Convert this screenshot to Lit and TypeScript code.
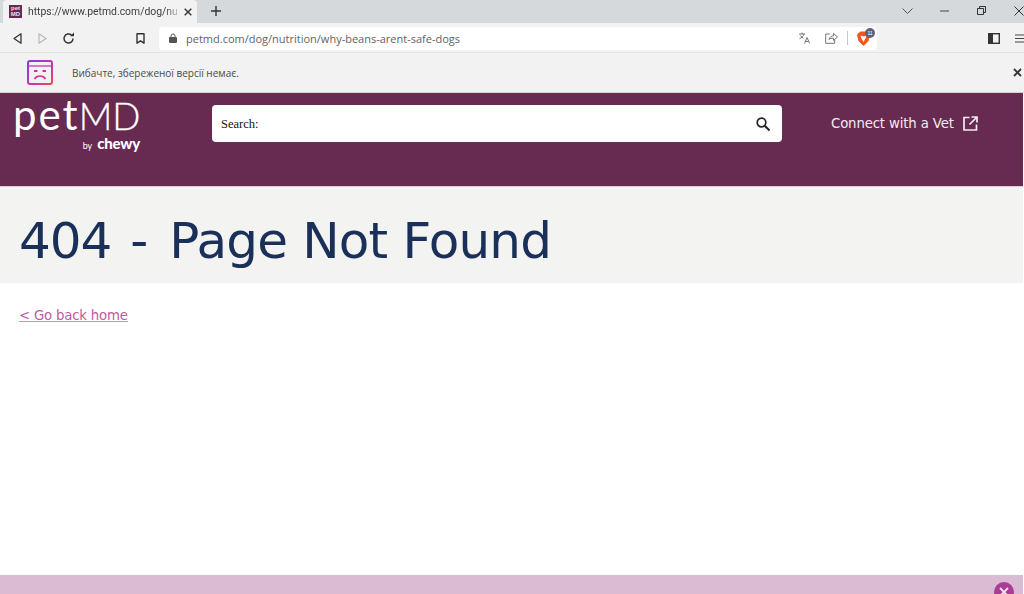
import { LitElement, html, css } from "lit";
import { customElement } from "lit/decorators.js";

@customElement("app-root")
export class AppRoot extends LitElement {
  static styles = css`
    :host { display: flex; flex-direction: column; width: 1024px; height: 594px; overflow: hidden; background: #fff; font-family: "Open Sans", "Noto Sans", sans-serif; color: #333; }
    svg { display: block; flex: none; }
    .tabstrip { height: 23px; background: #d5d9dc; display: flex; align-items: flex-end; flex: none; }
    .tab { margin-left: 3px; width: 194px; height: 23px; background: #f2f2f2; border-radius: 4px 4px 0 0; display: flex; align-items: center; box-sizing: border-box; padding-left: 6px; }
    .fav { width: 13px; height: 13px; background: #66294f; color: #f0e0e8; font: 700 6px/6px "Liberation Sans", sans-serif; text-align: center; flex: none; overflow: hidden; }
    .tabtitle { margin-left: 6px; width: 149px; white-space: nowrap; font: 10.4px Roboto, sans-serif; color: #3c4043; flex: none; -webkit-mask-image: linear-gradient(90deg, #000 92%, rgba(0,0,0,.3)); mask-image: linear-gradient(90deg, #000 92%, rgba(0,0,0,.3)); }
    .tabx { margin-left: 7px; }
    .newtab { margin-left: 14px; margin-bottom: 7px; }
    .spring { flex: 1; }
    .winctl { display: flex; align-items: center; height: 21px; margin-bottom: 2px; gap: 28px; }
    .toolbar { height: 30px; background: #f2f2f2; border-bottom: 1px solid #e4e4e4; box-sizing: border-box; display: flex; align-items: center; flex: none; padding-top: 1px; }
    .back { margin-left: 13px; }
    .fwd { margin-left: 16px; }
    .reload { margin-left: 15px; }
    .bookmark { margin-left: 61px; }
    .omni { margin-left: 14px; width: 718px; height: 23px; background: #fff; border-radius: 4px; display: flex; align-items: center; box-sizing: border-box; padding: 0 7px 0 10px; }
    .url { margin-left: 9px; font: 11px "Open Sans", sans-serif; color: #5f6368; white-space: nowrap; }
    .sep { width: 1px; height: 14px; background: #c8c8c8; margin: 0 9px; }
    .brave { position: relative; }
    .count { position: absolute; left: 8px; top: -3px; width: 10px; height: 10px; border-radius: 50%; background: #5f6375; color: #fff; font: 5px/10px "Liberation Sans", sans-serif; text-align: center; }
    .infobar { height: 40px; background: #f2f2f2; border-bottom: 1px solid #d4d4d4; box-sizing: border-box; display: flex; align-items: center; flex: none; padding-left: 27px; }
    .infotext { margin-left: 19px; font: 10px "Open Sans", sans-serif; color: #4a4a4a; }
    .infox { margin-left: auto; margin-right: 2px; }
    .pagewrap { flex: 1; display: flex; flex-direction: column; width: 1023px; }
    .page { flex: 1; display: flex; flex-direction: column; }
    .header { height: 94px; background: #672a51; border-bottom: 1px solid #d9d0d6; box-sizing: border-box; display: flex; align-items: flex-start; flex: none; }
    .logo { width: 199px; margin-left: 13px; color: #fff; flex: none; display: flex; flex-direction: column; }
    .logomain { width: 127px; white-space: nowrap; display: flex; align-items: baseline; height: 42px; font: 400 42px/42px Lato, sans-serif; letter-spacing: 2px; }
    .logomain .md { font: 300 37px/42px Lato, sans-serif; margin-left: -1px; letter-spacing: 0; -webkit-text-stroke: 0.3px #fff; }
    .logosub { width: 127px; margin-top: 1px; display: flex; justify-content: flex-end; align-items: baseline; gap: 5px; font: 9px/15px Lato, sans-serif; }
    .logosub b { font: 900 15px/15px Lato, sans-serif; letter-spacing: -0.2px; }
    .search { margin-top: 12px; width: 570px; height: 37px; background: #fff; border-radius: 4px; display: flex; align-items: center; justify-content: space-between; box-sizing: border-box; padding: 1px 12px 0 9px; flex: none; font: 12.5px "Liberation Serif", serif; color: #111; }
    .connect { margin-left: 49px; margin-top: 12px; height: 37px; display: flex; align-items: center; gap: 9px; font: 13.3px "DejaVu Sans", Verdana, sans-serif; letter-spacing: -0.15px; color: #f4eaf0; white-space: nowrap; }
    .band { height: 96px; background: #f3f3f2; flex: none; padding-left: 19px; box-sizing: border-box; }
    h1 { margin: 0; font: 400 50px/108px "DejaVu Sans", Verdana, sans-serif; color: #1b3059; white-space: nowrap; }
    .code { letter-spacing: -1px; margin-right: 3px; }
    .rest { letter-spacing: -0.8px; margin-left: 5px; }
    .body { flex: 1; padding: 20px 19px 0; }
    a { font: 13.3px/18px "DejaVu Sans", Verdana, sans-serif; letter-spacing: -0.2px; color: #bc5aa3; text-decoration: underline; text-decoration-color: #dd85c8; }
    .bottom { height: 19px; background: #d9bbd4; flex: none; position: relative; }
    .close { position: absolute; left: 994px; top: 7px; width: 20px; height: 20px; border-radius: 50%; background: #ab3c95; display: flex; align-items: center; justify-content: center; }
  `;

  render() {
    return html`
      <div class="tabstrip">
        <div class="tab">
          <div class="fav">pet<br />MD</div>
          <div class="tabtitle">https://www.petmd.com/dog/nut</div>
          <svg class="tabx" width="8" height="8" viewBox="0 0 8 8"><path d="M.7.7l6.600 6.600M7.300.7l-6.600 6.600" stroke="#333" stroke-width="1.400"/></svg>
        </div>
        <svg class="newtab" width="10" height="10" viewBox="0 0 10 10"><path d="M5 0v10M0 5h10" stroke="#333" stroke-width="1.400"/></svg>
        <div class="spring"></div>
        <div class="winctl">
          <svg style="margin-right:-1px" width="11" height="6" viewBox="0 0 11 6"><path d="M.5.5l5 5 5-5" fill="none" stroke="#555" stroke-width="1"/></svg>
          <svg width="9" height="2" viewBox="0 0 9 2"><path d="M0 1h9" stroke="#444" stroke-width="1"/></svg>
          <svg width="9" height="9" viewBox="0 0 9 9"><path d="M.5 2.500h6v6h-6zM2.500 2.500v-2h6v6h-2" fill="none" stroke="#333" stroke-width="1"/></svg>
          <svg width="10" height="10" viewBox="0 0 10 10"><path d="M.5.5l9 9M9.500.5l-9 9" stroke="#333" stroke-width="1"/></svg>
        </div>
      </div>

      <div class="toolbar">
        <svg class="back" width="9" height="11" viewBox="0 0 9 11"><path d="M8 .8v9.400L1 5.500z" fill="none" stroke="#333" stroke-width="1.300" stroke-linejoin="round"/></svg>
        <svg class="fwd" width="9" height="11" viewBox="0 0 9 11"><path d="M1 .8v9.400l7-4.700z" fill="none" stroke="#b8b8b8" stroke-width="1.200" stroke-linejoin="round"/></svg>
        <svg class="reload" width="13" height="13" viewBox="0 0 13 13"><path d="M11 6.500A4.500 4.500 0 1 1 9.600 3.200" fill="none" stroke="#333" stroke-width="1.500"/><path d="M8 4.200h4V.5z" fill="#333"/></svg>
        <svg class="bookmark" width="9" height="11" viewBox="0 0 9 11"><path d="M1 .8h7v9.400L4.500 7.800 1 10.200z" fill="none" stroke="#333" stroke-width="1.400" stroke-linejoin="round"/></svg>
        <div class="omni">
          <svg width="8" height="10" viewBox="0 0 8 10"><path d="M2 4.500V3a2 2 0 0 1 4 0v1.500" fill="none" stroke="#555" stroke-width="1"/><rect y="4" width="8" height="6" rx="1" fill="#555"/></svg>
          <span class="url">petmd.com/dog/nutrition/why-beans-arent-safe-dogs</span>
          <div class="spring"></div>
          <svg width="12" height="12" viewBox="0 0 12 12"><path d="M0 2h6M3 .5V2M5 2c-.5 2-2 3.600-4.500 4.600M1.500 3.500c.8 1.400 1.800 2.200 3 2.800M5.500 11.500 8 5.500l2.700 6M6.500 9.500h3" fill="none" stroke="#666" stroke-width=".9"/></svg>
          <svg style="margin-left:14px" width="13" height="12" viewBox="0 0 13 12"><path d="M5 2H.7v9.300h9V8M4 7.500C4.500 5 6.500 3.800 8.500 3.800V1.500L12.500 5 8.500 8.300V6.200C6.500 6 5 6.500 4 7.500z" fill="none" stroke="#666" stroke-width=".9"/></svg>
          <div class="sep"></div>
          <div class="brave">
            <svg width="13" height="15" viewBox="0 0 13 15"><path d="M1 2.500 3.500.5h6l2.500 2 1 1.500-1.500 6-4.500 4.500a1 1 0 0 1-1 0L1.500 10 0 4z" fill="#f1561f"/><path d="M3.500 4.500 6.500 5.500l3-1-1 3-2 3.500-2-3.500z" fill="#fff"/></svg>
            <div class="count">11</div>
          </div>
        </div>
        <svg style="margin-left:111px" width="12" height="11" viewBox="0 0 12 11"><rect x=".7" y=".7" width="10.600" height="9.600" fill="none" stroke="#333" stroke-width="1.400"/><rect x="1" y="1" width="4" height="9" fill="#333"/></svg>
        <svg style="margin-left:15px" width="9" height="9" viewBox="0 0 9 9"><path d="M0 1h9M0 4.500h9M0 8h9" stroke="#444" stroke-width="1.200"/></svg>
      </div>

      <div class="infobar">
        <svg width="26" height="25" viewBox="0 0 26 25">
          <defs><linearGradient id="g" x1="0" y1="0" x2="1" y2="1"><stop offset="0" stop-color="#7b3fe0"/><stop offset=".55" stop-color="#c832b4"/><stop offset="1" stop-color="#f0455a"/></linearGradient></defs>
          <rect x="1" y="1" width="24" height="23" rx="2" fill="none" stroke="url(#g)" stroke-width="2"/>
          <path d="M1 6h24" stroke="#b43ac8" stroke-width="1.300"/>
          <path d="M7.500 19c2-4 9-4 11 0" fill="none" stroke="#d8329c" stroke-width="1.700"/>
          <path d="M7 11h3.500M15.500 11h3.500" stroke="#c832b4" stroke-width="1.800"/>
        </svg>
        <span class="infotext">Вибачте, збереженої версії немає.</span>
        <svg class="infox" width="9" height="9" viewBox="0 0 9 9"><path d="M1 1l7 7M8 1l-7 7" stroke="#333" stroke-width="1.800"/></svg>
      </div>

      <div class="pagewrap">
        <div class="page">
          <div class="header">
            <div class="logo">
              <div class="logomain"><span>pet</span><span class="md">MD</span></div>
              <div class="logosub"><span>by</span><b>chewy</b></div>
            </div>
            <div class="search">
              <span>Search:</span>
              <svg width="14" height="14" viewBox="0 0 14 14"><circle cx="5.500" cy="5.500" r="4.300" fill="none" stroke="#222" stroke-width="1.700"/><path d="M8.700 8.700l4.800 4.800" stroke="#222" stroke-width="2"/></svg>
            </div>
            <div class="connect">
              <span>Connect with a Vet</span>
              <svg width="15" height="15" viewBox="0 0 15 15"><path d="M6.500 1.500H1v12.500h12.500V8.500M8.500 1H14v5.500M14 1 6.500 8.500" fill="none" stroke="#f4eaf0" stroke-width="1.700"/></svg>
            </div>
          </div>
          <div class="band"><h1><span class="code">404</span> - <span class="rest">Page Not Found</span></h1></div>
          <div class="body"><a href="#">&lt; Go back home</a></div>
        </div>
        <div class="bottom">
          <div class="close"><svg width="10" height="10" viewBox="0 0 10 10"><path d="M1 1l8 8M9 1l-8 8" stroke="#f3e6f0" stroke-width="1.800"/></svg></div>
        </div>
      </div>
    `;
  }
}
